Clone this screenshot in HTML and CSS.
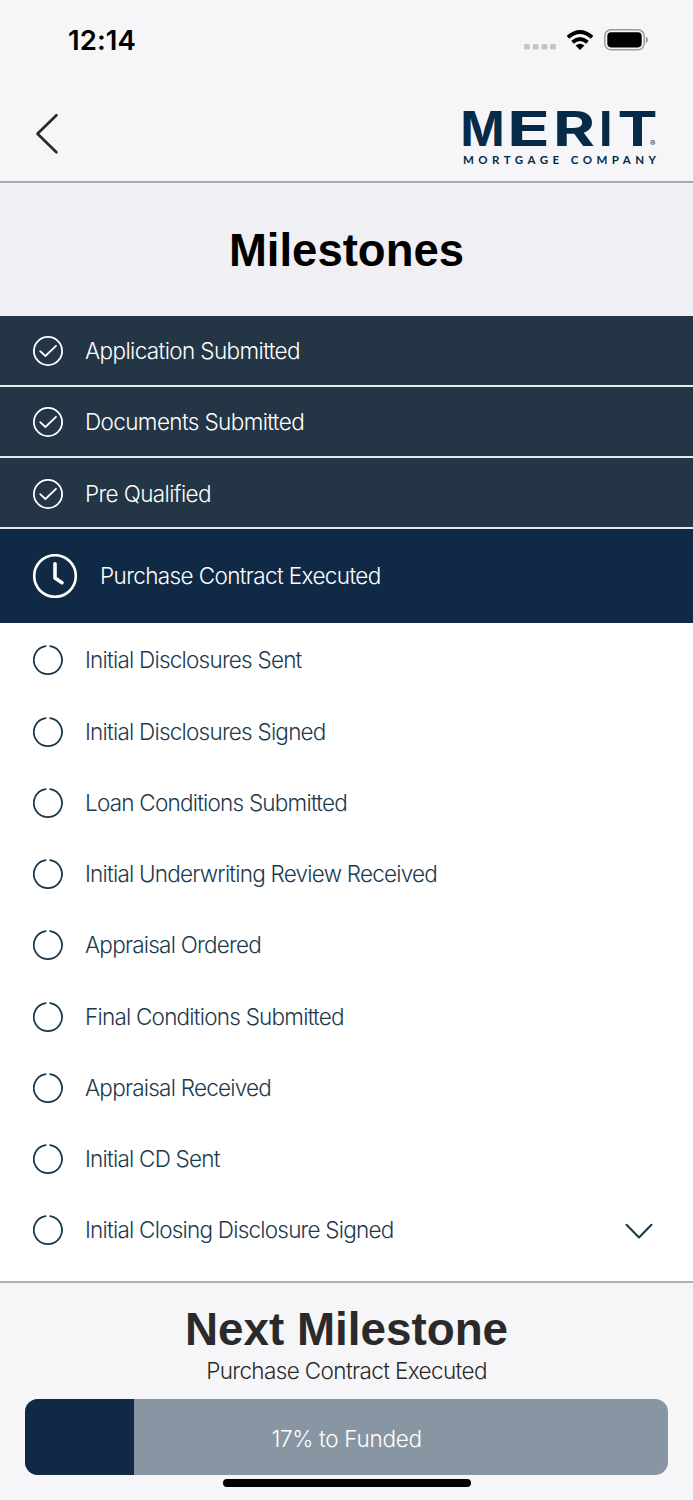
FILE: index.html
```html
<!DOCTYPE html>
<html lang="en">

<head>
    <meta charset="UTF-8">
    <title>Milestones</title>
    <link rel="stylesheet" href="styles.css">
</head>

<body>
    <svg class="defs">
        <symbol id="done" viewBox="0 0 30 30">
            <circle cx="15" cy="15" r="14.1" />
            <path d="M7.2 15.2 12.4 20 23 9.8" />
        </symbol>
        <symbol id="open" viewBox="0 0 30 30">
            <path d="M17.2 1.1A14.1 14.1 0 1 1 12.6 1.1" />
        </symbol>
    </svg>
    <div class="app">
        <header class="header">
            <div class="status">
                <span class="time">12:14</span>
                <div class="signals">
                    <svg class="dots" width="32" height="6" viewBox="0 0 32 6">
                        <rect x="0" width="6" height="5.5" rx="1.5" />
                        <rect x="8.7" width="6" height="5.5" rx="1.5" />
                        <rect x="17.4" width="6" height="5.5" rx="1.5" />
                        <rect x="26" width="6" height="5.5" rx="1.5" />
                    </svg>
                    <svg class="wifi" width="28" height="21" viewBox="0 0 28 21">
                        <path d="M1.9 7.2Q14-3.2 26.1 7.2M6.5 12.2Q14 5.8 21.5 12.2" />
                        <path class="fill" d="M9.6 15.6Q14 12 18.4 15.6L14 20Z" />
                    </svg>
                    <svg class="battery" width="45" height="22" viewBox="0 0 45 22">
                        <rect class="shell" x=".8" y=".8" width="39.4" height="20" rx="6.2" />
                        <rect x="3.3" y="3.2" width="34.4" height="15.2" rx="3.8" />
                        <path class="tip" d="M41.8 7.4Q44 8.4 44 10.8T41.8 14.2Z" />
                    </svg>
                </div>
            </div>
            <div class="nav">
                <svg class="back" width="24" height="42" viewBox="0 0 24 42">
                    <path d="M21.4 2.2 2.5 20.8 21.4 39.3" />
                </svg>
                <svg class="logo" width="200" height="60" viewBox="0 0 200 60">
                    <text class="merit" y="38.5"><tspan x="-.5" textLength="44" lengthAdjust="spacingAndGlyphs">M</tspan><tspan x="46" textLength="43" lengthAdjust="spacingAndGlyphs">E</tspan><tspan x="92" textLength="42" lengthAdjust="spacingAndGlyphs">R</tspan><tspan x="138" textLength="13.5" lengthAdjust="spacingAndGlyphs">I</tspan><tspan x="156.5" textLength="40" lengthAdjust="spacingAndGlyphs">T</tspan></text>
                    <text class="company" x="2" y="57" textLength="193">MORTGAGE COMPANY</text>
                    <text class="reg" x="189" y="38.5">®</text>
                </svg>
            </div>
        </header>
        <h1 class="title">Milestones</h1>
        <ul class="list">
            <li class="done"><svg><use href="#done" /></svg>Application Submitted</li>
            <li class="done"><svg><use href="#done" /></svg>Documents Submitted</li>
            <li class="done"><svg><use href="#done" /></svg>Pre Qualified</li>
            <li class="current">
                <svg viewBox="0 0 44 44">
                    <circle cx="22" cy="22" r="20.8" />
                    <path d="M22 9.8V24L29 28.7" />
                </svg>
                Purchase Contract Executed
            </li>
            <li><svg><use href="#open" /></svg>Initial Disclosures Sent</li>
            <li><svg><use href="#open" /></svg>Initial Disclosures Signed</li>
            <li><svg><use href="#open" /></svg>Loan Conditions Submitted</li>
            <li><svg><use href="#open" /></svg>Initial Underwriting Review Received</li>
            <li><svg><use href="#open" /></svg>Appraisal Ordered</li>
            <li><svg><use href="#open" /></svg>Final Conditions Submitted</li>
            <li><svg><use href="#open" /></svg>Appraisal Received</li>
            <li><svg><use href="#open" /></svg>Initial CD Sent</li>
            <li>
                <svg><use href="#open" /></svg>Initial Closing Disclosure Signed
                <svg class="more" viewBox="0 0 28 17">
                    <path d="M1.5 1.8 14 14.6 26.5 1.8" />
                </svg>
            </li>
        </ul>
        <footer class="footer">
            <h2>Next Milestone</h2>
            <p>Purchase Contract Executed</p>
            <div class="progress">
                <div class="bar" style="width: 17%"></div>
                <span class="label">17% to Funded</span>
            </div>
            <div class="home"></div>
        </footer>
    </div>
</body>

</html>
```
FILE: styles.css
```css
* {
    margin: 0;
    padding: 0;
    list-style: none;
    box-sizing: border-box;
}

body {
    background: #fff;
    font: 300 22.5px/28px Inter, "Liberation Sans", sans-serif;
}

svg {
    display: block;
    flex: none;
    fill: none;
    stroke-linecap: round;
    stroke-linejoin: round;
}

.defs {
    width: 0;
    height: 0;
    position: absolute;
}

.app {
    height: 1500px;
    display: flex;
    flex-direction: column;
    overflow: hidden;
}

.header {
    height: 183px;
    flex: none;
    background: #f6f6f8;
    border-bottom: 2px solid #a9a9ac;
}

.status {
    height: 80px;
    padding: 0 44px 0 68px;
    display: flex;
    align-items: center;
    justify-content: space-between;
}

.time {
    font-size: 27.5px;
    font-weight: 600;
    letter-spacing: .1px;
}

.signals {
    display: flex;
    align-items: center;
}

.dots {
    fill: #c4c4c6;
    margin: 13px 10px 0 0;
}

.wifi {
    stroke: #000;
    stroke-width: 3.8;
    stroke-linecap: butt;
    margin-right: 10px;
}

.wifi .fill {
    fill: #000;
    stroke: none;
}

.battery {
    fill: #000;
}

.battery .shell {
    fill: none;
    stroke: #9b9b9d;
    stroke-width: 1.5;
}

.battery .tip {
    fill: #9b9b9d;
}

.nav {
    padding: 27px 32px 0 35px;
    display: flex;
    justify-content: space-between;
}

.back {
    margin-top: 6px;
    stroke: #2a2a2a;
    stroke-width: 2.7;
}

.logo {
    overflow: visible;
    fill: #052b49;
}

.merit {
    font-size: 48.5px;
    font-weight: 700;
}

.company {
    font: 700 11.5px Lato, sans-serif;
}

.reg {
    font-size: 8px;
    font-weight: 400;
}

.title {
    height: 132.5px;
    flex: none;
    background: #efeff4;
    font: bold 45.5px/136px "Liberation Sans", Arial, sans-serif;
    text-align: center;
}

.list {
    height: 965.5px;
    flex: none;
    color: #1c3a4d;
}

.list li {
    height: 71.25px;
    padding-left: 33px;
    display: flex;
    align-items: center;
    gap: 22px;
    letter-spacing: -.78px;
}

.list svg {
    width: 30px;
    height: 30px;
    stroke: #1c3a4d;
    stroke-width: 1.8;
}

.list .done {
    padding-top: 2px;
    color: #fff;
    background: #243545;
    border-bottom: 2px solid #e6e9ec;
    letter-spacing: -.62px;
}

.list .current {
    height: 94px;
    margin-bottom: 1.5px;
    color: #fff;
    background: #102a45;
    letter-spacing: -.62px;
}

.list .done svg {
    stroke: #fff;
}

.list .current svg {
    width: 44px;
    height: 44px;
    margin-right: 1px;
    stroke: #fff;
    stroke-width: 2.6;
}

.list .current path {
    stroke-width: 3.6;
}

.list .more {
    width: 28px;
    height: 17px;
    margin: 2px 40px 0 auto;
    stroke-width: 2.1;
}

.footer {
    flex: 1;
    padding: 23px 25px 0;
    background: #f6f6f8;
    border-top: 2px solid #b0b3b5;
    color: #2a2a2a;
    text-align: center;
}

.footer h2 {
    font: bold 45.8px/48px "Liberation Sans", Arial, sans-serif;
}

.footer p {
    margin-top: 3px;
    letter-spacing: -.62px;
}

.progress {
    height: 76px;
    margin-top: 14px;
    position: relative;
    overflow: hidden;
    border-radius: 13px;
    background: #8895a2;
}

.bar {
    height: 100%;
    background: #102a45;
}

.label {
    position: absolute;
    inset: 0;
    line-height: 79px;
    letter-spacing: -.3px;
    color: #fff;
}

.home {
    width: 248px;
    height: 8px;
    margin: 4px auto 0;
    border-radius: 4px;
    background: #000;
}
```
